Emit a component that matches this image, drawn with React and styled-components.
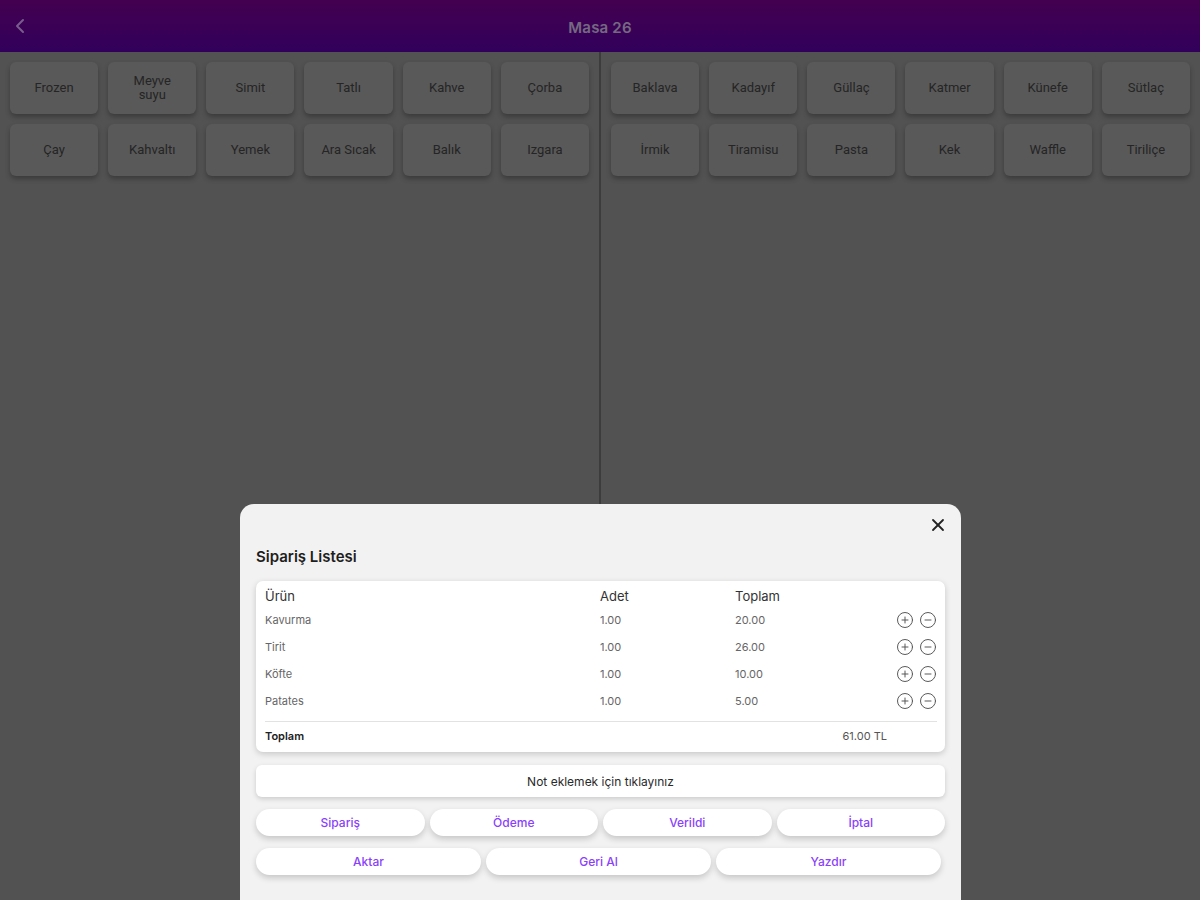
import React from 'react';
import styled, { createGlobalStyle } from 'styled-components';
import { ChevronLeft, X, CirclePlus, CircleMinus } from 'lucide-react';

const GlobalStyle = createGlobalStyle`
  html, body {
    margin: 0;
    padding: 0;
    height: 100%;
  }
  body {
    font-family: 'Inter', 'Roboto', sans-serif;
    background: #959595;
    overflow: hidden;
  }
`;

const leftItems = ['Frozen', 'Meyve suyu', 'Simit', 'Tatlı', 'Kahve', 'Çorba', 'Çay', 'Kahvaltı', 'Yemek', 'Ara Sıcak', 'Balık', 'Izgara'];
const rightItems = ['Baklava', 'Kadayıf', 'Güllaç', 'Katmer', 'Künefe', 'Sütlaç', 'İrmik', 'Tiramisu', 'Pasta', 'Kek', 'Waffle', 'Tiriliçe'];

const orders = [
  { name: 'Kavurma', qty: '1.00', total: '20.00' },
  { name: 'Tirit', qty: '1.00', total: '26.00' },
  { name: 'Köfte', qty: '1.00', total: '10.00' },
  { name: 'Patates', qty: '1.00', total: '5.00' },
];

const App = () => {
  return (
    <>
      <GlobalStyle />
      <Page>
        <Header>
          <BackButton>
            <ChevronLeft size={24} strokeWidth={2} />
          </BackButton>
          <Title>Masa 26</Title>
        </Header>
        <Body>
          <Panel>
            {leftItems.map((item) => (
              <CategoryButton key={item}>{item}</CategoryButton>
            ))}
          </Panel>
          <Divider />
          <Panel>
            {rightItems.map((item) => (
              <CategoryButton key={item}>{item}</CategoryButton>
            ))}
          </Panel>
        </Body>
      </Page>

      <Overlay />

      <Modal>
        <CloseButton>
          <X size={20} strokeWidth={2.2} />
        </CloseButton>
        <ModalTitle>Sipariş Listesi</ModalTitle>

        <Card>
          <OrderTable>
            <HeadCell>Ürün</HeadCell>
            <HeadCell>Adet</HeadCell>
            <HeadCell>Toplam</HeadCell>
            <span />
            {orders.map((o) => (
              <React.Fragment key={o.name}>
                <Cell>{o.name}</Cell>
                <Cell>{o.qty}</Cell>
                <Cell>{o.total}</Cell>
                <Actions>
                  <CirclePlus size={18} strokeWidth={1.3} />
                  <CircleMinus size={18} strokeWidth={1.3} />
                </Actions>
              </React.Fragment>
            ))}
          </OrderTable>
          <Line />
          <TotalRow>
            <span>Toplam</span>
            <TotalValue>61.00 TL</TotalValue>
          </TotalRow>
        </Card>

        <NoteCard>Not eklemek için tıklayınız</NoteCard>

        <ButtonRow $cols={4}>
          <PillButton>Sipariş</PillButton>
          <PillButton>Ödeme</PillButton>
          <PillButton>Verildi</PillButton>
          <PillButton>İptal</PillButton>
        </ButtonRow>
        <ButtonRow $cols={3} $end={4}>
          <PillButton>Aktar</PillButton>
          <PillButton>Geri Al</PillButton>
          <PillButton>Yazdır</PillButton>
        </ButtonRow>
      </Modal>
    </>
  );
};

const Page = styled.div`
  display: flex;
  flex-direction: column;
  height: 100vh;
`;

const Header = styled.div`
  height: 52px;
  flex-shrink: 0;
  display: flex;
  align-items: center;
  justify-content: center;
  position: relative;
  background: linear-gradient(180deg, #7c0092 0%, #5a00a6 100%);
`;

const BackButton = styled.div`
  position: absolute;
  left: 8px;
  top: 14px;
  color: #d9a8ff;
  display: flex;
`;

const Title = styled.h1`
  margin: 2px 0 0 0;
  font-family: 'Inter', sans-serif;
  font-size: 15px;
  font-weight: 600;
  color: #d4c0ea;
  letter-spacing: 0.2px;
`;

const Body = styled.div`
  flex: 1;
  display: flex;
`;

const Panel = styled.div`
  flex: 1;
  display: grid;
  grid-template-columns: repeat(6, minmax(0, 1fr));
  grid-auto-rows: 52px;
  align-content: start;
  gap: 10px;
  padding: 10px 10px;
`;

const Divider = styled.div`
  width: 2px;
  background: #6e6e6e;
`;

const CategoryButton = styled.div`
  display: flex;
  align-items: center;
  justify-content: center;
  text-align: center;
  padding: 0 12px;
  background: #a2a2a2;
  border-radius: 6px;
  box-shadow: 0 3px 5px rgba(0, 0, 0, 0.28);
  font-family: 'Roboto', sans-serif;
  font-size: 13px;
  line-height: 14px;
  color: #444;
`;

const Overlay = styled.div`
  position: fixed;
  inset: 0;
  background: rgba(0, 0, 0, 0.45);
`;

const Modal = styled.div`
  position: fixed;
  left: 240px;
  top: 504px;
  width: 721px;
  bottom: -30px;
  box-sizing: border-box;
  background: #f2f2f2;
  border-radius: 14px;
  padding: 43px 16px 0 16px;
  display: flex;
  flex-direction: column;
`;

const CloseButton = styled.div`
  position: absolute;
  right: 13px;
  top: 11px;
  color: #222;
  display: flex;
`;

const ModalTitle = styled.h2`
  margin: 0 0 15px 0;
  font-size: 15px;
  font-weight: 600;
  color: #1e1e1e;
`;

const Card = styled.div`
  background: #fff;
  border-radius: 7px;
  box-shadow: 0 2px 6px rgba(0, 0, 0, 0.18);
  padding: 7px 8px 3px 9px;
`;

const OrderTable = styled.div`
  display: grid;
  grid-template-columns: 335px 135px 1fr auto;
  grid-auto-rows: 27px;
  grid-template-rows: 18px;
  align-items: center;
`;

const HeadCell = styled.div`
  font-size: 13px;
  color: #333;
  align-self: start;
`;

const Cell = styled.div`
  font-size: 11px;
  color: #666;
`;

const Actions = styled.div`
  display: flex;
  gap: 5px;
  color: #555;
`;

const Line = styled.div`
  height: 1px;
  background: #e2e2e2;
  margin: 7px 0 0 0;
`;

const TotalRow = styled.div`
  display: flex;
  justify-content: space-between;
  align-items: center;
  height: 27px;
  padding-right: 50px;
  font-size: 11px;
  font-weight: 600;
  color: #222;
`;

const TotalValue = styled.span`
  font-weight: 400;
  color: #555;
`;

const NoteCard = styled.div`
  margin-top: 13px;
  height: 32px;
  background: #fff;
  border-radius: 6px;
  box-shadow: 0 2px 5px rgba(0, 0, 0, 0.16);
  display: flex;
  align-items: center;
  justify-content: center;
  font-size: 12px;
  color: #2a2a2a;
`;

const ButtonRow = styled.div`
  margin-top: 12px;
  margin-right: ${(p) => (p.$end ? `${p.$end}px` : '0')};
  display: grid;
  grid-template-columns: repeat(${(p) => p.$cols}, 1fr);
  gap: 5px;
`;

const PillButton = styled.div`
  height: 27px;
  background: #fff;
  border-radius: 14px;
  box-shadow: 0 3px 6px rgba(0, 0, 0, 0.18);
  display: flex;
  align-items: center;
  justify-content: center;
  font-size: 12px;
  font-weight: 500;
  color: #8a3ffc;
`;

export default App;
